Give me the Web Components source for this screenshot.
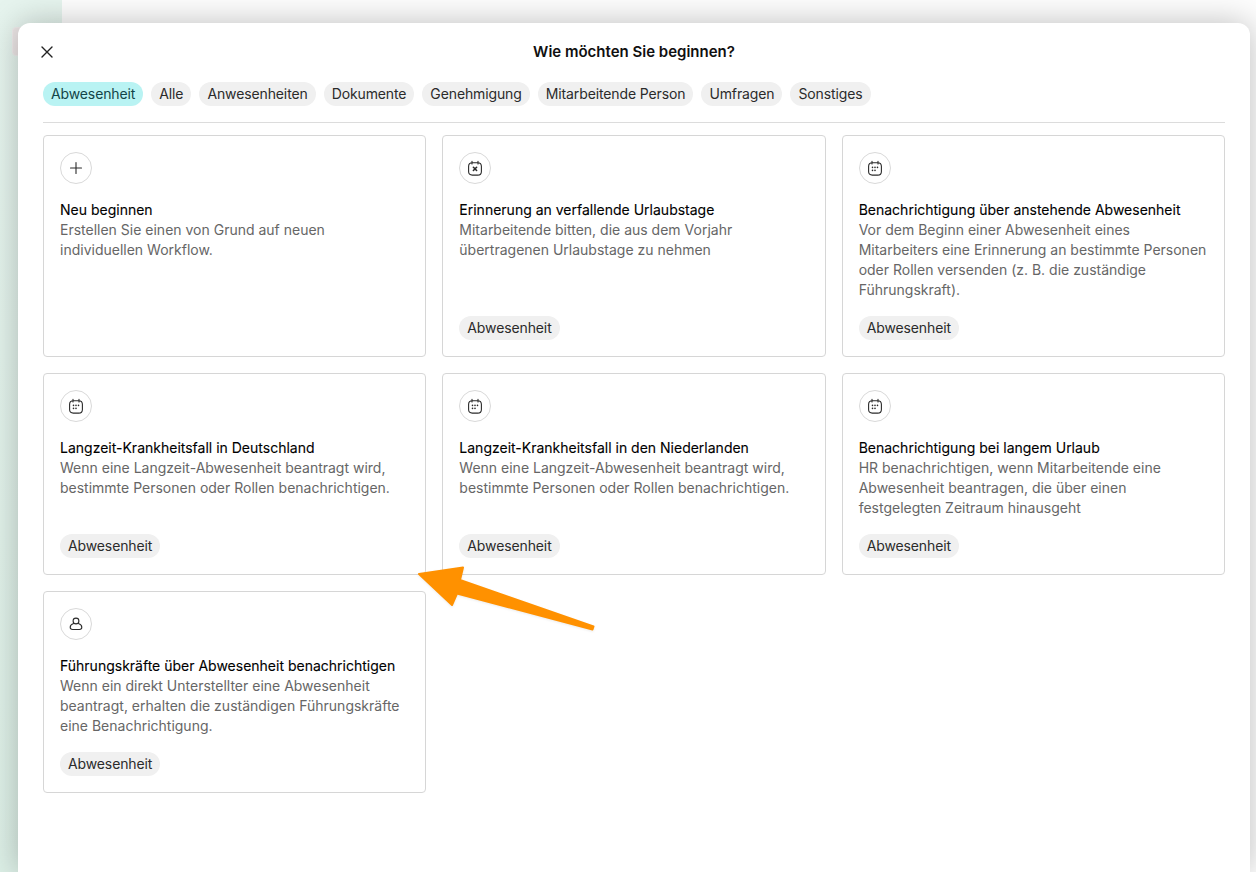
<!DOCTYPE html>
<html lang="de">
<head>
<meta charset="utf-8">
<title>Wie möchten Sie beginnen?</title>
<style>
html, body { margin: 0; height: 100%; overflow: hidden; }
body { font-family: Inter, "Liberation Sans", sans-serif; }
</style>
</head>
<body>
<app-backdrop>
  <workflow-dialog heading="Wie möchten Sie beginnen?">
    <filter-chip slot="filters" active>Abwesenheit</filter-chip>
    <filter-chip slot="filters">Alle</filter-chip>
    <filter-chip slot="filters">Anwesenheiten</filter-chip>
    <filter-chip slot="filters">Dokumente</filter-chip>
    <filter-chip slot="filters">Genehmigung</filter-chip>
    <filter-chip slot="filters">Mitarbeitende Person</filter-chip>
    <filter-chip slot="filters">Umfragen</filter-chip>
    <filter-chip slot="filters">Sonstiges</filter-chip>

    <template-card icon="plus" heading="Neu beginnen">Erstellen Sie einen von Grund auf neuen individuellen Workflow.</template-card>
    <template-card icon="calendar-x" heading="Erinnerung an verfallende Urlaubstage" tag="Abwesenheit">Mitarbeitende bitten, die aus dem Vorjahr übertragenen Urlaubstage zu nehmen</template-card>
    <template-card icon="calendar" heading="Benachrichtigung über anstehende Abwesenheit" tag="Abwesenheit">Vor dem Beginn einer Abwesenheit eines Mitarbeiters eine Erinnerung an bestimmte Personen oder Rollen versenden (z. B. die zuständige Führungskraft).</template-card>
    <template-card icon="calendar" heading="Langzeit-Krankheitsfall in Deutschland" tag="Abwesenheit">Wenn eine Langzeit-Abwesenheit beantragt wird, bestimmte Personen oder Rollen benachrichtigen.</template-card>
    <template-card icon="calendar" heading="Langzeit-Krankheitsfall in den Niederlanden" tag="Abwesenheit">Wenn eine Langzeit-Abwesenheit beantragt wird, bestimmte Personen oder Rollen benachrichtigen.</template-card>
    <template-card icon="calendar" heading="Benachrichtigung bei langem Urlaub" tag="Abwesenheit">HR benachrichtigen, wenn Mitarbeitende eine Abwesenheit beantragen, die über einen festgelegten Zeitraum hinausgeht</template-card>
    <template-card icon="person" heading="Führungskräfte über Abwesenheit benachrichtigen" tag="Abwesenheit">Wenn ein direkt Unterstellter eine Abwesenheit beantragt, erhalten die zuständigen Führungskräfte eine Benachrichtigung.</template-card>
  </workflow-dialog>
  <callout-arrow></callout-arrow>
</app-backdrop>

<script>
// squircle calendar body with its two tabs, shared by both calendar icons
const CALENDAR = '<path d="M5.3 2.7h5.4c2.4 0 3.7 1.3 3.7 3.7v5c0 2.4-1.3 3.7-3.7 3.7H5.3c-2.4 0-3.7-1.3-3.7-3.7v-5c0-2.4 1.3-3.7 3.7-3.7zM5 1.3v2.6M11 1.3v2.6"/>';

const ICONS = {
  plus: '<path d="M8 2.5v11M2.5 8h11"/>',
  "calendar-x": CALENDAR + '<path d="M6.4 7.3l3.2 3.2M9.6 7.3l-3.2 3.2" stroke-width="1.6"/>',
  calendar: CALENDAR + '<path d="M5.5 7.4h.01M8 7.4h.01M10.5 7.4h.01M5.5 10.4h.01M8 10.4h.01" stroke-width="1.6"/>',
  person: '<circle cx="8" cy="5" r="2.9"/><path d="M5.6 7.6C3.6 8.3 2.2 9.5 2.2 11.3c0 1.4 1 2.2 2.4 2.2h6.8c1.4 0 2.4-.8 2.4-2.2 0-1.8-1.4-3-3.4-3.7"/>'
};

class AppBackdrop extends HTMLElement {
  constructor() {
    super();
    this.attachShadow({ mode: "open" }).innerHTML = `
<style>
:host { display: block; position: relative; width: 100%; height: 100vh; overflow: hidden; background: #fdfdfd; }
.rail { position: absolute; left: 0; top: 0; bottom: 0; width: 62px; background: linear-gradient(180deg, #e6f4ee, #dcefe6); }
.stub { position: absolute; left: 12px; top: 27px; width: 20px; height: 29px; box-sizing: border-box; border-radius: 4px; background: #ece6e6; border: 1px solid #f0ecec; }
</style>
<div class="rail"></div>
<div class="stub"></div>
<slot></slot>`;
  }
}

class WorkflowDialog extends HTMLElement {
  constructor() {
    super();
    this.attachShadow({ mode: "open" }).innerHTML = `
<style>
:host { display: block; position: absolute; left: 18px; top: 23px; width: 1232px; bottom: 0; box-sizing: border-box; padding: 0 25px;
  background: #fff; border-radius: 12px 12px 0 0; box-shadow: 0 0 32px rgba(0,0,0,.25); }
header { height: 59px; display: flex; align-items: center; justify-content: center; position: relative; }
h1 { margin: 0; font-size: 15px; line-height: 24px; font-weight: 600; color: #101010; position: relative; top: -1px; }
button { position: absolute; left: -3px; top: 22px; width: 14px; height: 14px; padding: 0; border: 0; background: none; color: #222; display: block; }
svg { display: block; width: 14px; height: 14px; }
.filters { display: flex; gap: 8px; padding-bottom: 16px; border-bottom: 1px solid #dcdcdc; }
.grid { display: grid; grid-template-columns: repeat(3, 1fr); gap: 16px; margin-top: 12px; }
</style>
<header>
  <button aria-label="Schließen"><svg viewBox="0 0 14 14" fill="none" stroke="currentColor" stroke-width="1.4" stroke-linecap="round"><path d="M2 2l10 10M12 2L2 12"/></svg></button>
  <h1></h1>
</header>
<div class="filters"><slot name="filters"></slot></div>
<div class="grid"><slot></slot></div>`;
    this.shadowRoot.querySelector("h1").textContent = this.getAttribute("heading");
  }
}

class FilterChip extends HTMLElement {
  constructor() {
    super();
    this.attachShadow({ mode: "open" }).innerHTML = `
<style>
:host { display: block; height: 24px; padding: 0 8px; border-radius: 12px; background: #f0f0f0; color: #2b2b2b;
  font-size: 14px; line-height: 24px; letter-spacing: -0.12px; white-space: nowrap; }
:host([active]) { background: #b9f3f3; color: #124548; }
</style>
<slot></slot>`;
  }
}

class TemplateCard extends HTMLElement {
  constructor() {
    super();
    const tag = this.getAttribute("tag");
    this.attachShadow({ mode: "open" }).innerHTML = `
<style>
:host { display: flex; flex-direction: column; box-sizing: border-box; min-width: 0; padding: 16px; background: #fff;
  border: 1px solid #d6d6d6; border-radius: 4px; }
.icon { width: 32px; height: 32px; box-sizing: border-box; border: 1px solid #d9d9d9; border-radius: 50%; display: flex; align-items: center; justify-content: center; color: #2a2a2a; }
svg { display: block; width: 16px; height: 16px; }
h2 { margin: 16px 0 0; font-size: 14px; line-height: 20px; font-weight: 400; color: #000; -webkit-text-stroke: .1px #000; }
p { margin: 0; font-size: 14px; line-height: 20px; color: #666; }
.tag { align-self: flex-start; margin-top: auto; height: 24px; padding: 0 8px; border-radius: 12px; background: #f0f0f0; color: #2b2b2b; font-size: 14px; line-height: 24px; letter-spacing: -0.12px; }
.spacer { height: 16px; flex: none; }
</style>
<div class="icon"><svg viewBox="0 0 16 16" fill="none" stroke="currentColor" stroke-width="1.1" stroke-linecap="round" stroke-linejoin="round">${ICONS[this.getAttribute("icon")]}</svg></div>
<h2></h2>
<p><slot></slot></p>
${tag ? '<div class="spacer"></div><div class="tag"></div>' : ""}`;
    this.shadowRoot.querySelector("h2").textContent = this.getAttribute("heading");
    if (tag) this.shadowRoot.querySelector(".tag").textContent = tag;
  }
}

class CalloutArrow extends HTMLElement {
  constructor() {
    super();
    this.attachShadow({ mode: "open" }).innerHTML = `
<style>
:host { display: block; position: absolute; left: 410px; top: 558px; width: 195px; height: 80px; }
svg { display: block; overflow: visible; filter: drop-shadow(0 1px 1px rgba(0,0,0,.08)); }
</style>
<svg width="195" height="80" viewBox="410 558 195 80"><path d="M419 574 L463 567.5 L460 580 L593.5 626.5 L592.5 629.5 L457 593.5 L452 605 Z" fill="#ff9100" stroke="#ff9100" stroke-width="2" stroke-linejoin="round"/></svg>`;
  }
}

customElements.define("app-backdrop", AppBackdrop);
customElements.define("workflow-dialog", WorkflowDialog);
customElements.define("filter-chip", FilterChip);
customElements.define("template-card", TemplateCard);
customElements.define("callout-arrow", CalloutArrow);
</script>
</body>
</html>
